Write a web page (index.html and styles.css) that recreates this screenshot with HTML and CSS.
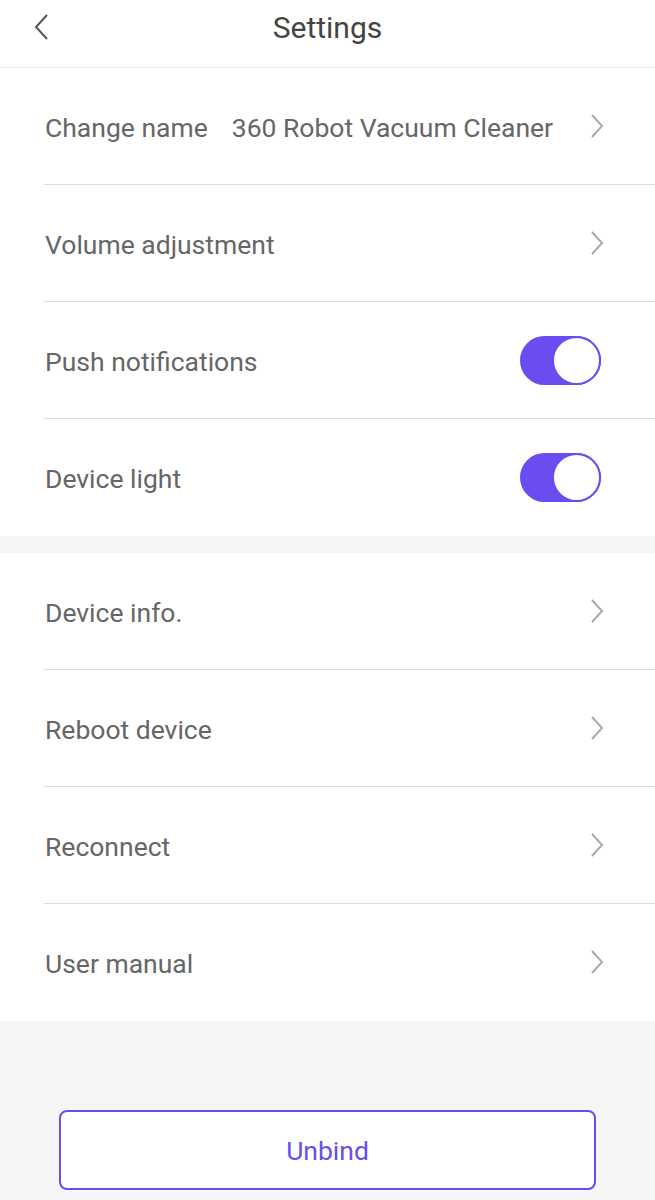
FILE: index.html
```html
<!DOCTYPE html>
<html>
<head>
<meta charset="utf-8">
<link rel="stylesheet" href="styles.css">
</head>
<body>
<div class="page">
  <header class="topbar">
    <svg class="back" width="16" height="26" viewBox="0 0 16 26"><path d="M13 1 L2 13 L13 25" fill="none" stroke="#555" stroke-width="2"/></svg>
    <div class="title">Settings</div>
  </header>
  <section class="group">
    <div class="row">
      <span class="label">Change name</span>
      <span class="value">360 Robot Vacuum Cleaner</span>
      <svg class="chev" width="14" height="24" viewBox="0 0 14 24"><path d="M2 1 L12 12 L2 23" fill="none" stroke="#aaa" stroke-width="2"/></svg>
    </div>
    <div class="row">
      <span class="label">Volume adjustment</span>
      <svg class="chev" width="14" height="24" viewBox="0 0 14 24"><path d="M2 1 L12 12 L2 23" fill="none" stroke="#aaa" stroke-width="2"/></svg>
    </div>
    <div class="row">
      <span class="label">Push notifications</span>
      <span class="toggle"><span class="knob"></span></span>
    </div>
    <div class="row">
      <span class="label">Device light</span>
      <span class="toggle"><span class="knob"></span></span>
    </div>
  </section>
  <section class="group">
    <div class="row">
      <span class="label">Device info.</span>
      <svg class="chev" width="14" height="24" viewBox="0 0 14 24"><path d="M2 1 L12 12 L2 23" fill="none" stroke="#aaa" stroke-width="2"/></svg>
    </div>
    <div class="row">
      <span class="label">Reboot device</span>
      <svg class="chev" width="14" height="24" viewBox="0 0 14 24"><path d="M2 1 L12 12 L2 23" fill="none" stroke="#aaa" stroke-width="2"/></svg>
    </div>
    <div class="row">
      <span class="label">Reconnect</span>
      <svg class="chev" width="14" height="24" viewBox="0 0 14 24"><path d="M2 1 L12 12 L2 23" fill="none" stroke="#aaa" stroke-width="2"/></svg>
    </div>
    <div class="row">
      <span class="label">User manual</span>
      <svg class="chev" width="14" height="24" viewBox="0 0 14 24"><path d="M2 1 L12 12 L2 23" fill="none" stroke="#aaa" stroke-width="2"/></svg>
    </div>
  </section>
  <div class="footer">
    <button class="unbind">Unbind</button>
  </div>
</div>
</body>
</html>
```
FILE: styles.css
```css
html, body {
  margin: 0;
  padding: 0;
  background: #f6f6f6;
}
body {
  font-family: Roboto, "Noto Sans", sans-serif;
  color: #666;
}
.page {
  width: 655px;
  min-height: 1200px;
  background: #f6f6f6;
}
.topbar {
  height: 67px;
  background: #fff;
  border-bottom: 1px solid #e8e8e8;
  display: flex;
  align-items: center;
  justify-content: center;
  position: relative;
}
.back {
  position: absolute;
  left: 34px;
  top: 14px;
}
.title {
  font-size: 30px;
  color: #444;
  margin-top: -12px;
}
.group {
  background: #fff;
  padding-left: 44px;
}
.group + .group {
  margin-top: 17px;
}
.row {
  height: 116px;
  display: flex;
  align-items: center;
  border-bottom: 1px solid #ddd;
  padding-right: 51px;
}
.row:last-child {
  border-bottom-color: #fff;
}
.label {
  font-size: 26.5px;
  color: #666;
  padding-left: 1px;
  margin-top: 3px;
}
.value {
  font-size: 26.5px;
  color: #666;
  margin-left: 24px;
  margin-top: 3px;
}
.chev {
  margin-left: auto;
  margin-right: 0;
}
.toggle {
  margin-left: auto;
  margin-right: 3px;
  width: 81px;
  height: 49px;
  border-radius: 25px;
  background: #6a4cf0;
  position: relative;
}
.knob {
  position: absolute;
  right: 0;
  top: 0;
  width: 45px;
  height: 45px;
  border-radius: 50%;
  background: #fff;
  border: 2px solid #6a4cf0;
}
.footer {
  padding: 89px 59px 0 59px;
}
.unbind {
  width: 537px;
  height: 80px;
  background: #fff;
  border: 2px solid #6a4cf0;
  border-radius: 8px;
  color: #6a4cf0;
  font-family: Roboto, "Noto Sans", sans-serif;
  font-size: 26.5px;
  display: block;
}
```
